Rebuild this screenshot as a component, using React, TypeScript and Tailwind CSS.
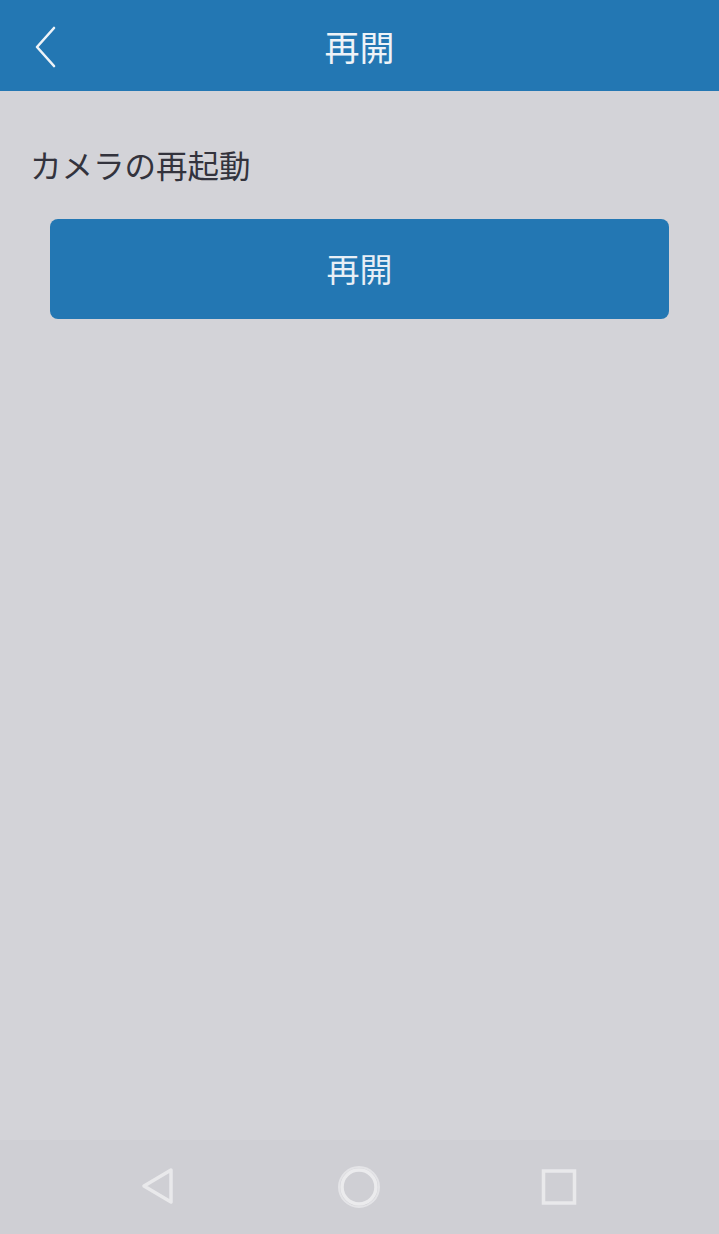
export default function App() {
  const cjk = { fontFamily: '"Noto Sans CJK JP", "Noto Sans", sans-serif' };

  return (
    <div className="flex h-[1234px] w-[719px] flex-col bg-[#d3d3d8]" style={cjk}>
      <header className="relative flex h-[91px] shrink-0 items-center justify-center bg-[#2377b3]">
        <button className="absolute left-[30px] top-[24px] flex h-[46px] w-[30px] items-center justify-center">
          <svg width="24" height="42" viewBox="0 0 24 42" fill="none">
            <path d="M21 2 L4 21 L21 40" stroke="#eef3f8" strokeWidth="2.6" strokeLinecap="round" strokeLinejoin="round" />
          </svg>
        </button>
        <h1 className="text-[35px] leading-none text-[#eef3f8]">再開</h1>
      </header>

      <main className="flex-1 px-[30px] pt-[58px]">
        <p className="text-[31.5px] leading-none text-[#33333d]">カメラの再起動</p>
        <div className="mt-[38px] px-[20px]">
          <button className="flex h-[100px] w-full items-center justify-center rounded-[8px] bg-[#2377b3] text-[33px] text-[#e8eff6]">
            再開
          </button>
        </div>
      </main>

      <nav className="grid h-[94px] shrink-0 grid-cols-3 items-center bg-[#cfcfd4] px-[60px]">
        <div className="flex justify-center">
          <svg width="44" height="44" viewBox="0 0 44 44" fill="none">
            <path d="M33 5 L6 21 L33 37 Z" stroke="#e9e9eb" strokeWidth="3.5" strokeLinejoin="round" />
          </svg>
        </div>
        <div className="flex justify-center">
          <svg width="48" height="48" viewBox="0 0 48 48" fill="none">
            <circle cx="24" cy="24" r="20" stroke="#e4e4e7" strokeWidth="2" />
            <circle cx="24" cy="24" r="17" stroke="#ebebed" strokeWidth="3.5" />
          </svg>
        </div>
        <div className="flex justify-center">
          <svg width="44" height="44" viewBox="0 0 44 44" fill="none">
            <rect x="6.5" y="6" width="31" height="32" stroke="#e9e9eb" strokeWidth="3.5" />
          </svg>
        </div>
      </nav>
    </div>
  );
}
